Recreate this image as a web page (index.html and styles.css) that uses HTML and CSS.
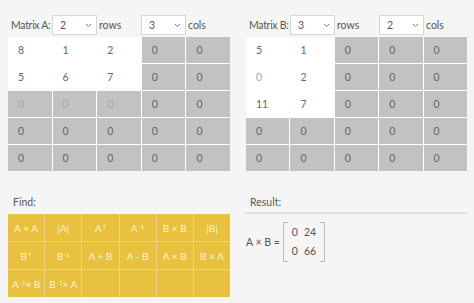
FILE: index.html
```html
<!DOCTYPE html>
<html lang="en">
<head>
  <meta charset="UTF-8" />
  <title>Matrix Calculator</title>
  <link rel="stylesheet" href="styles.css">
</head>
<body>

  <div class="top">
    <div class="panel">
      <div class="dims">
        <span class="label">Matrix A:</span>
        <div class="select"><span>2</span><svg width="7" height="5" viewBox="0 0 7 5"><path d="M1 1l2.5 2.5L6 1" fill="none" stroke="#777" stroke-width="1"/></svg></div>
        <span class="unit">rows</span>
        <div class="select"><span>3</span><svg width="7" height="5" viewBox="0 0 7 5"><path d="M1 1l2.5 2.5L6 1" fill="none" stroke="#777" stroke-width="1"/></svg></div>
        <span class="unit">cols</span>
      </div>
      <div class="matrix">
        <div class="cell on">8</div><div class="cell on">1</div><div class="cell on">2</div><div class="cell">0</div><div class="cell">0</div>
        <div class="cell on">5</div><div class="cell on">6</div><div class="cell on">7</div><div class="cell">0</div><div class="cell">0</div>
        <div class="cell faint">0</div><div class="cell faint">0</div><div class="cell faint">0</div><div class="cell">0</div><div class="cell">0</div>
        <div class="cell">0</div><div class="cell">0</div><div class="cell">0</div><div class="cell">0</div><div class="cell">0</div>
        <div class="cell">0</div><div class="cell">0</div><div class="cell">0</div><div class="cell">0</div><div class="cell">0</div>
      </div>
    </div>

    <div class="panel">
      <div class="dims">
        <span class="label">Matrix B:</span>
        <div class="select"><span>3</span><svg width="7" height="5" viewBox="0 0 7 5"><path d="M1 1l2.5 2.5L6 1" fill="none" stroke="#777" stroke-width="1"/></svg></div>
        <span class="unit">rows</span>
        <div class="select"><span>2</span><svg width="7" height="5" viewBox="0 0 7 5"><path d="M1 1l2.5 2.5L6 1" fill="none" stroke="#777" stroke-width="1"/></svg></div>
        <span class="unit">cols</span>
      </div>
      <div class="matrix">
        <div class="cell on">5</div><div class="cell on">1</div><div class="cell">0</div><div class="cell">0</div><div class="cell">0</div>
        <div class="cell on faint">0</div><div class="cell on">2</div><div class="cell">0</div><div class="cell">0</div><div class="cell">0</div>
        <div class="cell on">11</div><div class="cell on">7</div><div class="cell">0</div><div class="cell">0</div><div class="cell">0</div>
        <div class="cell">0</div><div class="cell">0</div><div class="cell">0</div><div class="cell">0</div><div class="cell">0</div>
        <div class="cell">0</div><div class="cell">0</div><div class="cell">0</div><div class="cell">0</div><div class="cell">0</div>
      </div>
    </div>
  </div>

  <div class="bottom">
    <div class="panel">
      <div class="heading">Find:</div>
      <div class="ops">
        <div class="op">A × A</div>
        <div class="op">|A|</div>
        <div class="op">A<sup>T</sup></div>
        <div class="op">A<sup>-1</sup></div>
        <div class="op">B × B</div>
        <div class="op">|B|</div>
        <div class="op">B<sup>T</sup></div>
        <div class="op">B<sup>-1</sup></div>
        <div class="op">A + B</div>
        <div class="op">A - B</div>
        <div class="op">A × B</div>
        <div class="op">B × A</div>
        <div class="op">A<sup>-1</sup> × B</div>
        <div class="op">B<sup>-1</sup> × A</div>
        <div class="op"></div>
        <div class="op"></div>
        <div class="op"></div>
        <div class="op"></div>
      </div>
    </div>

    <div class="panel">
      <div class="heading result-head">Result:</div>
      <div class="result">
        <span class="expr">A × B =</span>
        <div class="bracket">
          <div class="row"><span>0</span><span>24</span></div>
          <div class="row"><span>0</span><span>66</span></div>
        </div>
      </div>
    </div>
  </div>

</body>
</html>
```

FILE: styles.css
```css
body {
  font-family: 'Lato', sans-serif;
  font-size: 10.5px;
  background-color: #f5f5f5;
  margin: 0;
  padding: 0;
  color: #555;
}
.top, .bottom {
  display: grid;
  grid-template-columns: 222px 221px;
  column-gap: 16px;
  padding: 0 7px 0 8px;
}
.top {
  padding-top: 15px;
}
.dims {
  display: flex;
  align-items: center;
  height: 20px;
  margin-bottom: 2px;
  padding-left: 3px;
  white-space: nowrap;
}
.label {
  flex: none;
  width: 41px;
  letter-spacing: -0.3px;
}
.select {
  flex: none;
  width: 45px;
  height: 20px;
  box-sizing: border-box;
  background-color: #fff;
  border: 1px solid #d6d6d6;
  display: flex;
  align-items: center;
  justify-content: space-between;
  padding: 0 4px 0 7px;
}
.unit {
  flex: none;
  margin-left: 2px;
  width: 42px;
}
.matrix {
  display: grid;
  grid-template-columns: repeat(5, 1fr);
  grid-auto-rows: 26px;
  gap: 1px;
  background-color: #fff;
}
.cell {
  background-color: #c2c2c2;
  color: #666;
  padding-left: 10px;
  line-height: 26px;
}
.cell.on {
  background-color: #fff;
}
.cell.faint {
  color: #a8a8a8;
}
.bottom {
  margin-top: 21px;
}
.heading {
  height: 20px;
  line-height: 20px;
  padding-left: 5px;
  margin-bottom: 2px;
}
.ops {
  display: grid;
  grid-template-columns: repeat(6, 1fr);
  grid-auto-rows: 27px;
  gap: 1px;
  background-color: #efd47e;
}
.op {
  background-color: #e8c140;
  color: #fdf4d6;
  font-size: 10px;
  display: flex;
  align-items: center;
  justify-content: center;
}
.op sup {
  font-size: 6px;
  margin-left: 1px;
  position: relative;
  top: -1px;
}
.result-head {
  padding-left: 5px;
  border-bottom: 2px solid #e0e0e0;
  margin-left: -1px;
}
.result {
  display: flex;
  align-items: center;
  padding-top: 6px;
}
.expr {
  margin-right: 3px;
}
.bracket {
  border: 1px solid #bbb;
  padding: 0 8px;
  position: relative;
}
.bracket::before {
  content: "";
  position: absolute;
  top: -1px;
  bottom: -1px;
  left: 4px;
  right: 4px;
  background-color: #f5f5f5;
}
.bracket .row {
  position: relative;
  display: flex;
  gap: 6px;
  line-height: 19px;
}
```
